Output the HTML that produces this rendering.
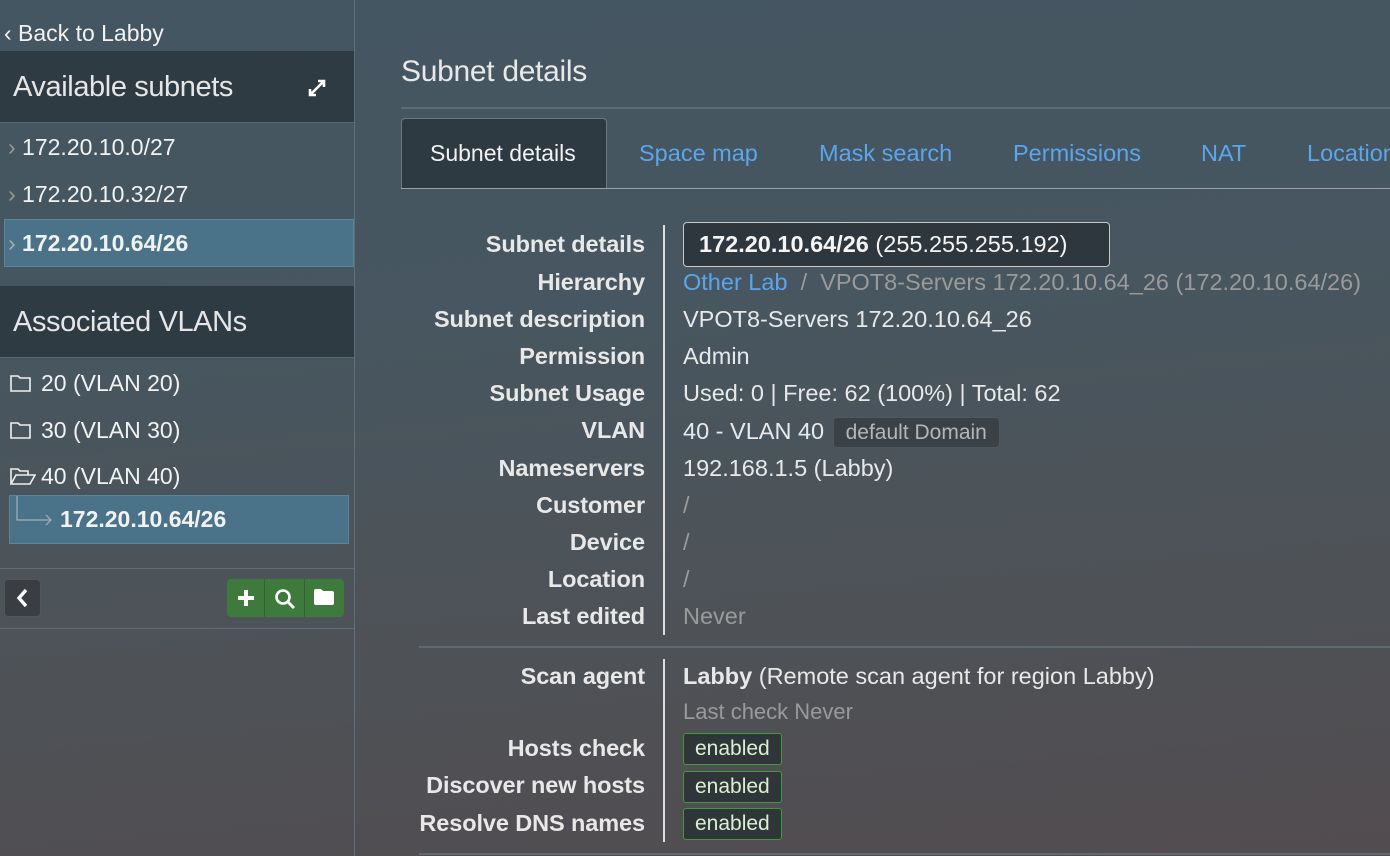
<!DOCTYPE html>
<html><head><meta charset="utf-8"><style>
*{margin:0;padding:0;box-sizing:border-box}
html,body{width:1390px;height:856px;overflow:hidden}
body{font-family:"Liberation Sans",sans-serif;color:#e8e8e8;position:relative;
background:linear-gradient(175deg,#445662 0%,#475660 35%,#4d5358 65%,#524c4f 100%);}
.a{position:absolute;white-space:nowrap}
.side{position:absolute;left:0;top:0;width:355px;height:856px;border-right:1px solid #5e6e7a}
.hdr{position:absolute;left:0;width:354px;background:#2f3b43;height:72px;border-bottom:1px solid #5a6670;font-size:29px;font-weight:300;color:#e6e6e6;padding-left:13px;letter-spacing:-0.4px}
.item{font-size:23px;color:#f2f2f2}
.sel{position:absolute;background:#4a7389;border:1px solid #5c8396}
.lbl{font-size:23.5px;font-weight:bold;color:#e8e8e8;text-align:right;right:745px;letter-spacing:-0.1px}
.val{font-size:23.5px;color:#e8e8e8;left:683px}
.muted{color:#9a9a9a}
.badge{display:inline-block;background:#2f3539;border:1px solid #3e9b3a;border-radius:3px;color:#d9f0d0;font-size:21px;padding:2px 11px;line-height:26px}
.tab{font-size:23.5px;color:#5aa6ee}
</style></head><body>
<div class="side">
  <div class="a" style="left:4px;top:20px;font-size:23px;color:#f2f2f2">‹ Back to Labby</div>
  <div class="hdr" style="top:51px;line-height:72px">Available subnets
    <svg class="a" style="left:307px;top:27px" width="20" height="20" viewBox="0 0 20 20"><path d="M3 17L17 3M11 3h6v6M3 11v6h6" stroke="#fff" stroke-width="2.6" fill="none"/></svg>
  </div>
  <div class="a item" style="left:8px;top:134px"><span style="color:#999">›</span> 172.20.10.0/27</div>
  <div class="a item" style="left:8px;top:181px"><span style="color:#999">›</span> 172.20.10.32/27</div>
  <div class="sel" style="left:4px;top:219px;width:350px;height:48px"></div>
  <div class="a item" style="left:8px;top:230px;font-weight:bold"><span style="color:#aaa;font-weight:normal">›</span> 172.20.10.64/26</div>
  <div class="hdr" style="top:286px;line-height:72px">Associated VLANs</div>
  <svg class="a" style="left:10px;top:374px" width="22" height="18" viewBox="0 0 22 18"><path d="M1 2h7l2 2h10v13H1z" fill="none" stroke="#f0f0f0" stroke-width="1.6"/></svg>
  <div class="a item" style="left:41px;top:370px">20 (VLAN 20)</div>
  <svg class="a" style="left:10px;top:421px" width="22" height="18" viewBox="0 0 22 18"><path d="M1 2h7l2 2h10v13H1z" fill="none" stroke="#f0f0f0" stroke-width="1.6"/></svg>
  <div class="a item" style="left:41px;top:417px">30 (VLAN 30)</div>
  <svg class="a" style="left:10px;top:467px" width="26" height="18" viewBox="0 0 26 18"><path d="M1 17V2h7l2 2h8v4M1 17l5-9h19l-5 9z" fill="none" stroke="#f0f0f0" stroke-width="1.6"/></svg>
  <div class="a item" style="left:41px;top:463px">40 (VLAN 40)</div>
  <div class="sel" style="left:9px;top:495px;width:340px;height:49px"></div>
  <svg class="a" style="left:16px;top:496px" width="40" height="30" viewBox="0 0 40 30"><path d="M1 0v24h34M30 19l5 5-5 5" fill="none" stroke="#a0b0b8" stroke-width="1.2"/></svg>
  <div class="a item" style="left:60px;top:506px;font-weight:bold">172.20.10.64/26</div>
  <div class="a" style="left:0;top:568px;width:354px;border-top:1px solid #5e6e7a"></div>
  <div class="a" style="left:4px;top:579px;width:37px;height:38px;background:#3a3d42;border:1px solid #555;border-radius:4px"></div>
  <svg class="a" style="left:15px;top:588px" width="14" height="20" viewBox="0 0 14 20"><path d="M11 2L4 10l7 8" fill="none" stroke="#fff" stroke-width="3.4"/></svg>
  <div class="a" style="left:227px;top:579px;width:117px;height:38px;background:#3f7a3d;border-radius:4px"></div>
  <div class="a" style="left:264px;top:579px;width:1px;height:38px;background:#2f6430"></div>
  <div class="a" style="left:304px;top:579px;width:1px;height:38px;background:#2f6430"></div>
  <svg class="a" style="left:236px;top:588px" width="20" height="20" viewBox="0 0 20 20"><path d="M10 2v16M2 10h16" stroke="#fff" stroke-width="4"/></svg>
  <svg class="a" style="left:274px;top:588px" width="22" height="22" viewBox="0 0 22 22"><circle cx="9" cy="9" r="6.5" fill="none" stroke="#fff" stroke-width="2.6"/><path d="M14 14l6 6" stroke="#fff" stroke-width="3"/></svg>
  <svg class="a" style="left:313px;top:588px" width="22" height="18" viewBox="0 0 22 18"><path d="M1 3q0-2 2-2h5l2 2h9q2 0 2 2v10q0 2-2 2H3q-2 0-2-2z" fill="#fff"/></svg>
  <div class="a" style="left:0;top:628px;width:354px;border-top:1px solid #5e6e7a"></div>
</div>

<div class="a" style="left:401px;top:55px;font-size:30px;font-weight:300;color:#e8e8e8;letter-spacing:-0.3px">Subnet details</div>
<div class="a" style="left:401px;top:107px;width:989px;border-top:2px solid #5b6b76"></div>
<div class="a" style="left:401px;top:118px;width:206px;height:71px;background:#2e3a42;border:1px solid #6d7a82;border-bottom:none;border-radius:4px 4px 0 0"></div>
<div class="a" style="left:401px;top:188px;width:989px;border-top:1px solid #9aa1a5"></div>
<div class="a" style="left:430px;top:140px;font-size:23px;color:#f2f2f2">Subnet details</div>
<div class="a tab" style="left:639px;top:140px">Space map</div>
<div class="a tab" style="left:819px;top:140px">Mask search</div>
<div class="a tab" style="left:1013px;top:140px">Permissions</div>
<div class="a tab" style="left:1201px;top:140px">NAT</div>
<div class="a tab" style="left:1307px;top:140px">Location</div>

<div class="a" style="left:663px;top:225px;width:2px;height:410px;background:#ddd"></div>
<div class="a lbl" style="top:231px">Subnet details</div>
<div class="a lbl" style="top:269px">Hierarchy</div>
<div class="a lbl" style="top:306px">Subnet description</div>
<div class="a lbl" style="top:343px">Permission</div>
<div class="a lbl" style="top:380px">Subnet Usage</div>
<div class="a lbl" style="top:417px">VLAN</div>
<div class="a lbl" style="top:455px">Nameservers</div>
<div class="a lbl" style="top:492px">Customer</div>
<div class="a lbl" style="top:529px">Device</div>
<div class="a lbl" style="top:566px">Location</div>
<div class="a lbl" style="top:603px">Last edited</div>

<div class="a" style="left:683px;top:222px;width:427px;height:45px;background:#2e373e;border:1px solid #c8c8c8;border-radius:4px"></div>
<div class="a val" style="left:699px;top:231px;color:#f5f5f5"><b>172.20.10.64/26</b> (255.255.255.192)</div>
<div class="a val" style="top:269px"><span style="color:#5aa6ee">Other Lab</span> <span class="muted">&nbsp;/&nbsp; VPOT8-Servers 172.20.10.64_26 (172.20.10.64/26)</span></div>
<div class="a val" style="top:306px">VPOT8-Servers 172.20.10.64_26</div>
<div class="a val" style="top:343px">Admin</div>
<div class="a val" style="top:380px">Used: 0 | Free: 62 (100%) | Total: 62</div>
<div class="a val" style="top:417px">40 - VLAN 40 <span style="display:inline-block;background:#3b4247;border:1px solid #4f575c;border-radius:4px;color:#b5b5b5;font-size:21px;padding:1px 12px;line-height:27px;margin-left:2px">default Domain</span></div>
<div class="a val" style="top:455px">192.168.1.5 (Labby)</div>
<div class="a val muted" style="top:492px">/</div>
<div class="a val muted" style="top:529px">/</div>
<div class="a val muted" style="top:566px">/</div>
<div class="a val muted" style="top:603px">Never</div>

<div class="a" style="left:419px;top:646px;width:971px;border-top:2px solid #5f696f"></div>
<div class="a" style="left:663px;top:659px;width:2px;height:183px;background:#ddd"></div>
<div class="a lbl" style="top:663px">Scan agent</div>
<div class="a lbl" style="top:735px">Hosts check</div>
<div class="a lbl" style="top:772px">Discover new hosts</div>
<div class="a lbl" style="top:810px">Resolve DNS names</div>
<div class="a val" style="top:663px"><b>Labby</b> (Remote scan agent for region Labby)</div>
<div class="a val muted" style="top:699px;font-size:22px">Last check Never</div>
<div class="a val" style="top:733px"><span class="badge">enabled</span></div>
<div class="a val" style="top:771px"><span class="badge">enabled</span></div>
<div class="a val" style="top:808px"><span class="badge">enabled</span></div>
<div class="a" style="left:419px;top:853px;width:971px;border-top:2px solid #5f696f"></div>
</body></html>
